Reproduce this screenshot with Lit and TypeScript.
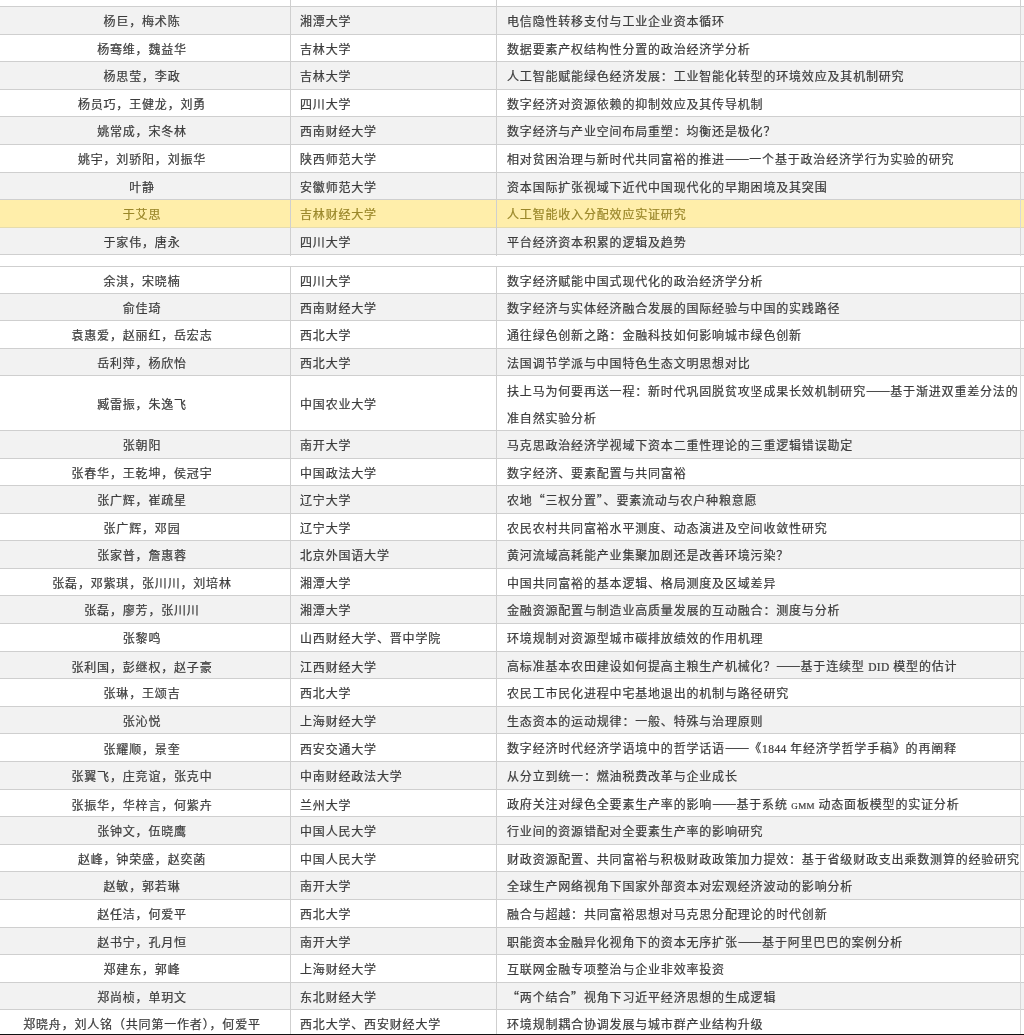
import { LitElement, html, css } from "lit";
import { customElement } from "lit/decorators.js";

type Row = [string, string, string];

const first: Row[] = [
  ["杨巨，梅术陈", "湘潭大学", "电信隐性转移支付与工业企业资本循环"],
  ["杨骞维，魏益华", "吉林大学", "数据要素产权结构性分置的政治经济学分析"],
  ["杨思莹，李政", "吉林大学", "人工智能赋能绿色经济发展：工业智能化转型的环境效应及其机制研究"],
  ["杨员巧，王健龙，刘勇", "四川大学", "数字经济对资源依赖的抑制效应及其传导机制"],
  ["姚常成，宋冬林", "西南财经大学", "数字经济与产业空间布局重塑：均衡还是极化？"],
  ["姚宇，刘骄阳，刘振华", "陕西师范大学", "相对贫困治理与新时代共同富裕的推进——一个基于政治经济学行为实验的研究"],
  ["叶静", "安徽师范大学", "资本国际扩张视域下近代中国现代化的早期困境及其突围"],
  ["于艾思", "吉林财经大学", "人工智能收入分配效应实证研究"],
  ["于家伟，唐永", "四川大学", "平台经济资本积累的逻辑及趋势"],
];

const second: Row[] = [
  ["余淇，宋晓楠", "四川大学", "数字经济赋能中国式现代化的政治经济学分析"],
  ["俞佳琦", "西南财经大学", "数字经济与实体经济融合发展的国际经验与中国的实践路径"],
  ["袁惠爱，赵丽红，岳宏志", "西北大学", "通往绿色创新之路：金融科技如何影响城市绿色创新"],
  ["岳利萍，杨欣怡", "西北大学", "法国调节学派与中国特色生态文明思想对比"],
  ["臧雷振，朱逸飞", "中国农业大学", "扶上马为何要再送一程：新时代巩固脱贫攻坚成果长效机制研究——基于渐进双重差分法的\n准自然实验分析"],
  ["张朝阳", "南开大学", "马克思政治经济学视域下资本二重性理论的三重逻辑错误勘定"],
  ["张春华，王乾坤，侯冠宇", "中国政法大学", "数字经济、要素配置与共同富裕"],
  ["张广辉，崔疏星", "辽宁大学", "农地“三权分置”、要素流动与农户种粮意愿"],
  ["张广辉，邓园", "辽宁大学", "农民农村共同富裕水平测度、动态演进及空间收敛性研究"],
  ["张家普，詹惠蓉", "北京外国语大学", "黄河流域高耗能产业集聚加剧还是改善环境污染？"],
  ["张磊，邓紫琪，张川川，刘培林", "湘潭大学", "中国共同富裕的基本逻辑、格局测度及区域差异"],
  ["张磊，廖芳，张川川", "湘潭大学", "金融资源配置与制造业高质量发展的互动融合：测度与分析"],
  ["张黎鸣", "山西财经大学、晋中学院", "环境规制对资源型城市碳排放绩效的作用机理"],
  ["张利国，彭继权，赵子豪", "江西财经大学", "高标准基本农田建设如何提高主粮生产机械化？——基于连续型 DID 模型的估计"],
  ["张琳，王颂吉", "西北大学", "农民工市民化进程中宅基地退出的机制与路径研究"],
  ["张沁悦", "上海财经大学", "生态资本的运动规律：一般、特殊与治理原则"],
  ["张耀顺，景奎", "西安交通大学", "数字经济时代经济学语境中的哲学话语——《1844 年经济学哲学手稿》的再阐释"],
  ["张翼飞，庄竞谊，张克中", "中南财经政法大学", "从分立到统一：燃油税费改革与企业成长"],
  ["张振华，华梓言，何紫卉", "兰州大学", "政府关注对绿色全要素生产率的影响——基于系统 GMM 动态面板模型的实证分析"],
  ["张钟文，伍晓鹰", "中国人民大学", "行业间的资源错配对全要素生产率的影响研究"],
  ["赵峰，钟荣盛，赵奕菡", "中国人民大学", "财政资源配置、共同富裕与积极财政政策加力提效：基于省级财政支出乘数测算的经验研究"],
  ["赵敏，郭若琳", "南开大学", "全球生产网络视角下国家外部资本对宏观经济波动的影响分析"],
  ["赵任洁，何爱平", "西北大学", "融合与超越：共同富裕思想对马克思分配理论的时代创新"],
  ["赵书宁，孔月恒", "南开大学", "职能资本金融异化视角下的资本无序扩张——基于阿里巴巴的案例分析"],
  ["郑建东，郭峰", "上海财经大学", "互联网金融专项整治与企业非效率投资"],
  ["郑尚桢，单玥文", "东北财经大学", "“两个结合”视角下习近平经济思想的生成逻辑"],
  ["郑晓舟，刘人铭（共同第一作者），何爱平", "西北大学、西安财经大学", "环境规制耦合协调发展与城市群产业结构升级"],
];

@customElement("app-root")
export class AppRoot extends LitElement {
  static styles = css`
    :host {
      display: flex;
      flex-direction: column;
      width: 1024px;
      height: 1035px;
      overflow: hidden;
      background: #fff;
      font-family: "Noto Sans CJK SC", "Noto Sans", sans-serif;
      font-size: 12px;
      letter-spacing: 0.82px;
      color: #3c3c3c;
      -webkit-text-stroke: 0.22px currentColor;
    }
    .sheet {
      flex: 1;
      min-height: 0;
      overflow: hidden;
      filter: blur(0.55px);
    }
    .bottom {
      height: 1px;
      flex: none;
      background: #111;
    }
    .row {
      display: grid;
      grid-template-columns: 291px 206px 524px;
      height: 27.6px;
      box-sizing: border-box;
      border-bottom: 1.5px solid #cfcfcf;
    }
    .row.lead { height: 7px; }
    .row.gray { background: #f2f2f2; }
    .row.hit { background: #ffeeaa; color: #9a872a; border-bottom-color: #e6dcae; }
    .row.tall { height: 54.6px; }
    .group-top { border-top: 1.5px solid #cfcfcf; margin-top: 10.6px; }
    .cell {
      display: flex;
      align-items: center;
      box-sizing: border-box;
      border-right: 1px solid #cfcfcf;
      white-space: nowrap;
      line-height: 27px;
      padding-bottom: 1.6px;
    }
    .tall .cell { padding-bottom: 0; }
    .tall .title { padding-top: 1px; }
    .name { justify-content: center; padding-right: 6px; }
    .uni { padding-left: 9px; }
    .title { padding-left: 10px; border-right-color: #d8d8d8; }
    .latin { font-family: "Liberation Serif", serif; font-size: 11.5px; letter-spacing: 0.4px; }
    .latin.narrow { font-size: 9px; }
    .dash { letter-spacing: 0; font-size: 14.5px; line-height: 1; }
    .line { display: block; }
  `;

  private text(s: string) {
    return s.split(/([A-Za-z0-9]+|——)/).map((p) =>
      p === "——"
        ? html`<span class="dash">${p}</span>`
        : /^[A-Za-z0-9]+$/.test(p)
          ? html`<span class="latin ${p === "GMM" ? "narrow" : ""}">${p}</span>`
          : p
    );
  }

  private row(r: Row, cls: string) {
    return html`<div class="row ${cls}">
      <div class="cell name">${r[0]}</div>
      <div class="cell uni">${r[1]}</div>
      <div class="cell title">
        <div>${r[2].split("\n").map((l) => html`<span class="line">${this.text(l)}</span>`)}</div>
      </div>
    </div>`;
  }

  render() {
    return html`<div class="sheet">
        <div class="row lead">
          <div class="cell"></div>
          <div class="cell"></div>
          <div class="cell"></div>
        </div>
        ${first.map((r, i) =>
          this.row(r, i === 7 ? "hit" : i % 2 === 0 ? "gray" : "")
        )}
        ${second.map((r, i) =>
          this.row(
            r,
            [i % 2 === 1 ? "gray" : "", i === 4 ? "tall" : "", i === 0 ? "group-top" : ""].join(" ")
          )
        )}
      </div>
      <div class="bottom"></div>`;
  }
}
